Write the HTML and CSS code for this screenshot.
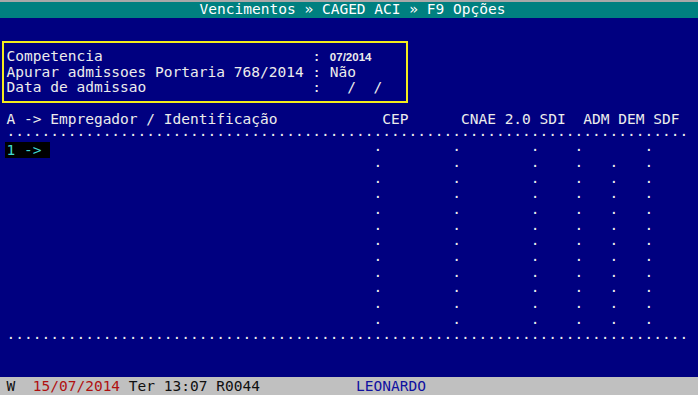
FILE: index.html
```html
<!DOCTYPE html>
<html lang="pt">
<head>
    <meta charset="UTF-8">
    <meta name="viewport" content="width=device-width, initial-scale=1.0">
    <title>CAGED ACI</title>
    <link rel="stylesheet" href="styles.css">
</head>
<body>
    <div class="screen">
        <div class="top-edge"></div>
        <div class="title-bar">Vencimentos » CAGED ACI » F9 Opções</div>

        <div class="main">
            <div class="params">
                <div class="line">Competencia                        : <span class="small-value">07/2014</span></div>
                <div class="line">Apurar admissoes Portaria 768/2014 : Não</div>
                <div class="line">Data de admissao                   :   /  /</div>
            </div>

            <div class="grid">
                <div class="line">A -&gt; Empregador / Identificação            CEP      CNAE 2.0 SDI  ADM DEM SDF</div>
                <div class="line">··············································································</div>
                <div class="line"><span class="cursor">1 -&gt; </span>                                     ·        ·        ·    ·       ·</div>
                <div class="line">                                          ·        ·        ·    ·   ·   ·</div>
                <div class="line">                                          ·        ·        ·    ·   ·   ·</div>
                <div class="line">                                          ·        ·        ·    ·   ·   ·</div>
                <div class="line">                                          ·        ·        ·    ·   ·   ·</div>
                <div class="line">                                          ·        ·        ·    ·   ·   ·</div>
                <div class="line">                                          ·        ·        ·    ·   ·   ·</div>
                <div class="line">                                          ·        ·        ·    ·   ·   ·</div>
                <div class="line">                                          ·        ·        ·    ·   ·   ·</div>
                <div class="line">                                          ·        ·        ·    ·   ·   ·</div>
                <div class="line">                                          ·        ·        ·    ·   ·   ·</div>
                <div class="line">                                          ·        ·        ·    ·   ·   ·</div>
                <div class="line">··············································································</div>
            </div>
        </div>

        <div class="status-bar">W  <span class="date">15/07/2014</span> Ter 13:07 R0044           <span class="user">LEONARDO</span></div>
    </div>
</body>
</html>
```

FILE: styles.css
```css
body {
    margin: 0;
    background: #000080;
}

.screen {
    width: 698px;
    height: 395px;
    display: flex;
    flex-direction: column;
    overflow: hidden;
    background: #000080;
    color: #ececec;
    font-family: "DejaVu Sans Mono", monospace;
    font-size: 14.53px;
    line-height: 15.7px;
}

.top-edge {
    height: 2px;
    background: #a8a8a8;
}

.title-bar {
    height: 15.7px;
    padding-left: 7px;
    background: #008080;
    color: #fff;
    text-align: center;
    white-space: pre;
}

.main {
    flex: 1;
}

.params {
    width: 406px;
    margin: 23.3px 0 0 2px;
    padding: 6.1px 0 4.8px 2.5px;
    box-sizing: border-box;
    border: 2px solid #f4ec1c;
}

.line {
    height: 15.7px;
    white-space: pre;
}

.small-value {
    font-family: "Liberation Sans", Arial, sans-serif;
    font-weight: bold;
    font-size: 11.5px;
}

.grid {
    margin-top: 8.9px;
    padding-left: 6.5px;
}

.cursor {
    margin-left: -1.5px;
    padding-left: 1.5px;
    background: #000;
    color: #40d8d0;
}

.status-bar {
    height: 18px;
    padding: 1.8px 0 0 6.5px;
    box-sizing: border-box;
    background: #c0c0c0;
    color: #101010;
    white-space: pre;
}

.date {
    color: #b01010;
}

.user {
    color: #1010a0;
}
```
